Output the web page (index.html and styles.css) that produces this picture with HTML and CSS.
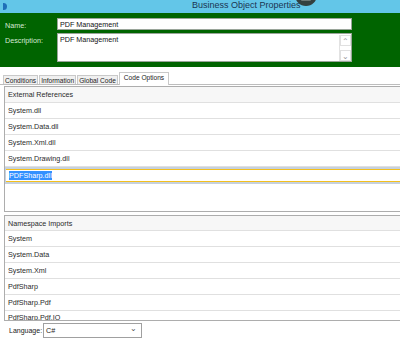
FILE: index.html
```html
<!DOCTYPE html>
<html>
	<head>
		<meta charset="utf-8">
		<title>Business Object Properties</title>
		<link rel="stylesheet" href="styles.css">
	</head>
	<body>
		<div class="titlebar">
			<span class="appIcon"></span>
			<span class="title">Business Object Properties</span>
			<span class="floatBtn"><i></i></span>
		</div>
		<div class="header">
			<label class="lbl">Name:</label>
			<div class="input">PDF Management</div>
			<label class="lbl">Description:</label>
			<div class="input memo">
				<span>PDF Management</span>
				<div class="vscroll">
					<span class="arrow">&#8963;</span>
					<span class="track"></span>
					<span class="arrow">&#8964;</span>
				</div>
			</div>
		</div>
		<ul class="tabs">
			<li>Conditions</li>
			<li>Information</li>
			<li>Global Code</li>
			<li class="current">Code Options</li>
		</ul>
		<div class="panel">
			<div class="grid refs">
				<div class="row head">External References</div>
				<div class="row">System.dll</div>
				<div class="row">System.Data.dll</div>
				<div class="row">System.Xml.dll</div>
				<div class="row">System.Drawing.dll</div>
				<div class="row editing"><div class="editor"><span class="sel">PDFSharp.dll</span></div></div>
			</div>
			<div class="grid imports">
				<div class="row head">Namespace Imports</div>
				<div class="row">System</div>
				<div class="row">System.Data</div>
				<div class="row">System.Xml</div>
				<div class="row">PdfSharp</div>
				<div class="row">PdfSharp.Pdf</div>
				<div class="row last">PdfSharp.Pdf.IO</div>
			</div>
		</div>
		<div class="lang">
			<label>Language:</label>
			<div class="select"><span>C#</span><b>&#8964;</b></div>
		</div>
	</body>
</html>
```
FILE: styles.css
```css
*{margin:0;padding:0;list-style:none;box-sizing:border-box;}
body{
	width:400px;
	height:339px;
	overflow:hidden;
	background:#fff;
	font-family:"Liberation Sans",Arial,sans-serif;
	font-size:7.2px;
	color:#1e1e1e;
}
.titlebar{
	height:13px;
	background:#63c6e8;
	position:relative;
	display:flex;
	align-items:flex-start;
}
.titlebar .appIcon{
	width:4px;
	height:7px;
	margin:3px 0 0 3px;
	background:#1f6fb8;
	border-radius:0 4px 4px 0;
}
.titlebar .title{
	margin-left:185px;
	font-size:9px;
	color:#1b3552;
	line-height:10px;
}
.titlebar .floatBtn{
	position:absolute;
	left:295px;
	top:-16px;
	width:22px;
	height:22px;
	border-radius:50%;
	background:#33403f;
}
.titlebar .floatBtn i{
	position:absolute;
	left:6px;
	top:12px;
	width:10px;
	height:5px;
	background:#6b7674;
	border-radius:1px;
}
.header{
	height:54px;
	background:#006400;
	padding:5px 48px 5px 5px;
	display:grid;
	grid-template-columns:52px 1fr;
	grid-template-rows:12px 29px;
	row-gap:3px;
}
.header .lbl{
	color:#d6e9d6;
	font-size:7.2px;
	padding-top:3px;
}
.header .input{
	background:#fff;
	border:1px solid #9aa59a;
	padding:2px 2px 0;
	color:#111;
	line-height:8px;
	position:relative;
}
.header .memo{display:flex;justify-content:space-between;padding-right:0;}
.vscroll{
	width:12px;
	display:flex;
	flex-direction:column;
	border-left:1px solid #e2e2e2;
	margin-top:-1px;
}
.vscroll .arrow{
	height:11px;
	border:1px solid #e0e0e0;
	color:#9a9a9a;
	font-size:8px;
	text-align:center;
	line-height:12px;
}
.vscroll .track{flex:1;}
.tabs{
	display:flex;
	align-items:flex-end;
	height:18px;
	padding-left:3px;
	border-bottom:1px solid #bdbdbd;
}
.tabs li{
	height:9px;
	margin-right:1px;
	padding:0 1px;
	background:#f0f0f0;
	border:1px solid #c9c9c9;
	border-bottom:none;
	font-size:6.6px;
	line-height:9px;
	color:#222;
}
.tabs li.current{
	height:13px;
	margin-bottom:-1px;
	padding:0 4px;
	background:#fff;
	line-height:10px;
}
.panel{padding:1px 0 0 4px;}
.grid{
	border:1px solid #adadad;
	border-right:none;
	margin-right:-2px;
}
.grid .row{
	height:16px;
	border-bottom:1px solid #e0e0e0;
	padding-left:3px;
	line-height:15px;
	color:#2a2a2a;
}
.grid .row.head{background:#f7f7f7;}
.refs{height:126px;}
.imports{height:106px;margin-top:3px;overflow:hidden;}
.imports .row.head{height:15px;}
.imports .row.last{line-height:13px;}
.grid .row.editing{
	height:17px;
	background:#c6d1de;
	padding:2px 0 0 1px;
	border-bottom:none;
}
.editor{
	height:13px;
	background:#fff;
	border-top:1px solid #f4c01c;
	border-bottom:1px solid #f4c01c;
	padding:1px 0 0 3px;
	line-height:9px;
}
.sel{background:#3390ff;color:#fff;}
.lang{
	display:flex;
	align-items:center;
	height:18px;
	padding-left:9px;
}
.lang label{width:34px;font-size:7px;color:#222;}
.select{
	width:99px;
	height:15px;
	border:1px solid #a0a0a0;
	display:flex;
	justify-content:space-between;
	align-items:center;
	padding:0 4px 0 2px;
}
.select b{font-weight:normal;font-size:8px;color:#555;margin-top:-4px;}
```
